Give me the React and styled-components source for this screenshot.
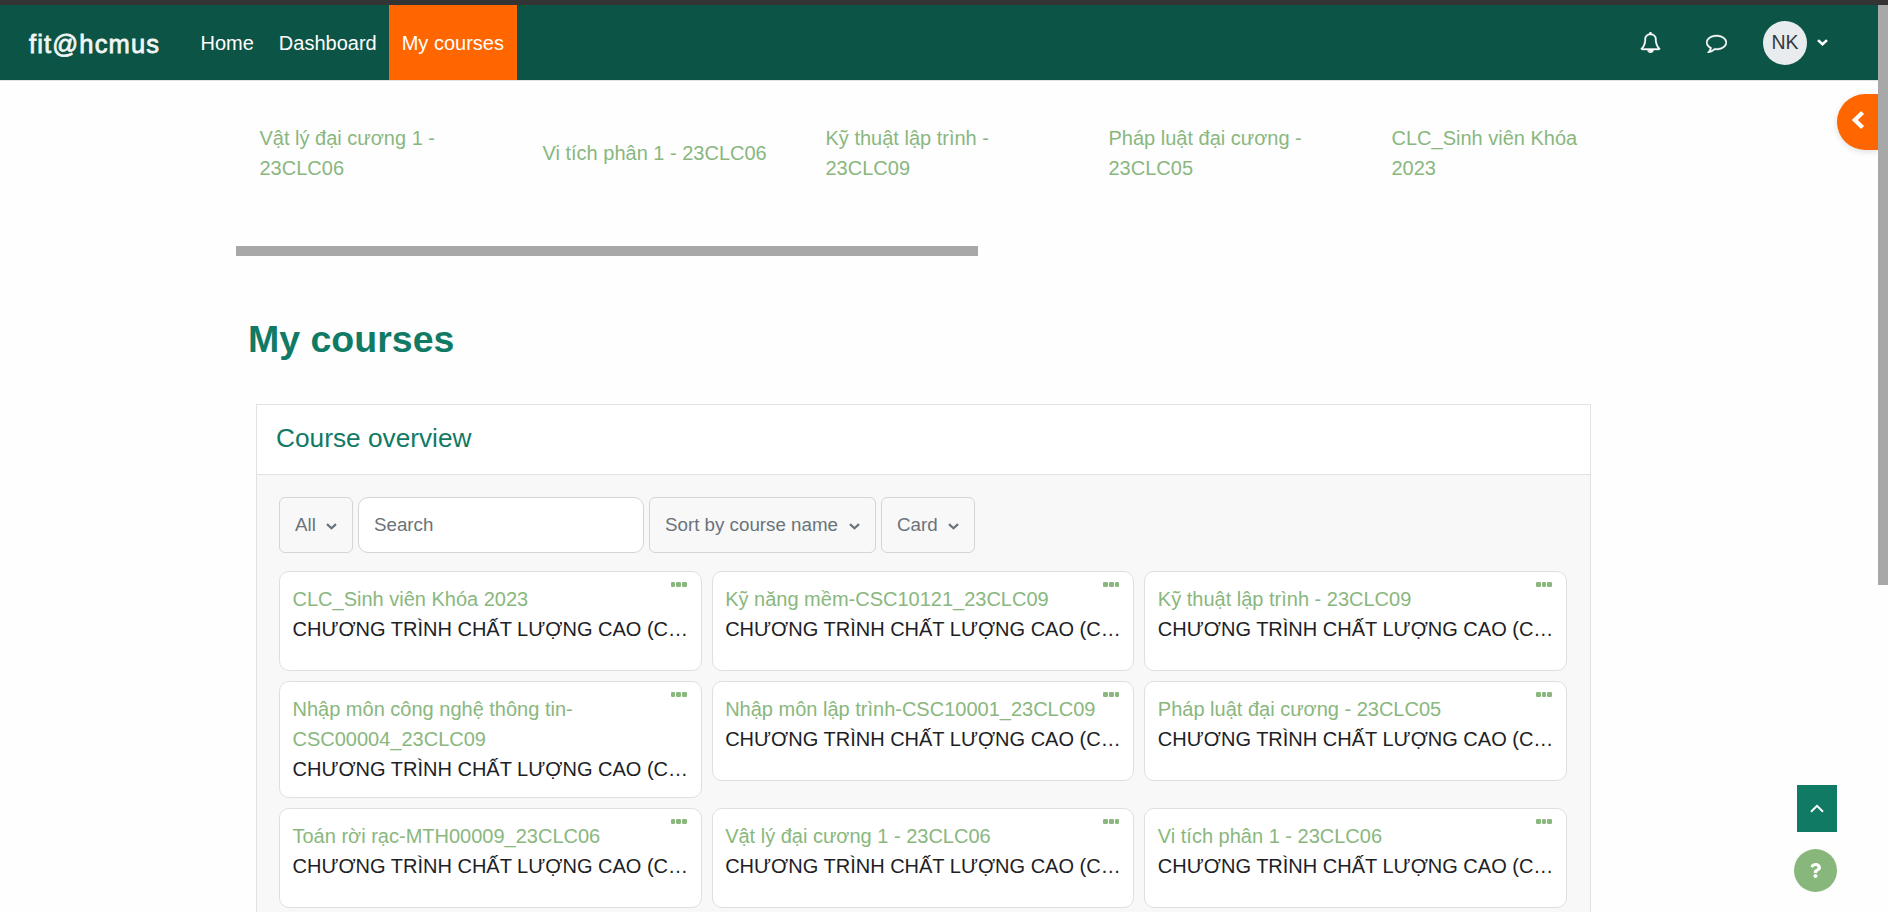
import React from "react";
import styled, { createGlobalStyle } from "styled-components";
import { FaQuestion } from "react-icons/fa";

const GlobalStyle = createGlobalStyle`
  *, *::before, *::after { box-sizing: border-box; }
  html, body { margin: 0; height: 912px; overflow: hidden; background: #fefefe; }
  body { font: 20px/30px "Liberation Sans", Arial, sans-serif; color: #1d2125; }
`;

const Screen = styled.div`
  position: relative;
  height: 912px;
  overflow: hidden;
  display: flex;
  flex-direction: column;
`;

const TopStrip = styled.div`
  flex: none;
  height: 5px;
  background: #343434;
`;

const Navbar = styled.header`
  flex: none;
  width: 1878px;
  height: 75px;
  display: flex;
  align-items: center;
  background: #0c5445;
  color: #fff;
  box-shadow: 0 1px 0 #dfe3e3;
`;

const Brand = styled.div`
  width: 188px;
  padding: 2px 0 0 29px;
  font-size: 25.5px;
  letter-spacing: 1.15px;
  -webkit-text-stroke: 0.8px #f1f5f4;
  color: #f1f5f4;
`;

const NavItem = styled.a`
  height: 75px;
  padding: 1px ${(p) => (p.$active ? "13.3px" : "12.5px")} 0 12.5px;
  line-height: 75px;
  white-space: nowrap;
  background: ${(p) => (p.$active ? "#ff6600" : "transparent")};
`;

const NavTools = styled.div`
  margin-left: auto;
  padding-right: 50px;
  display: flex;
  align-items: center;

  svg { display: block; }
`;

const ToolIcon = styled.span`
  width: 66px;
  padding-right: 1px;
  display: flex;
  justify-content: center;
`;

const Avatar = styled.div`
  width: 44px;
  height: 44px;
  margin: 1px 10px 0 13px;
  border-radius: 50%;
  background: #e9ecef;
  color: #343a40;
  font-size: 19.5px;
  line-height: 43px;
  text-align: center;
`;

const Content = styled.main`
  width: 1355px;
  margin-left: 236px;
`;

const RecentCourses = styled.nav`
  height: 166px;
  padding: 43px 0 0 23.5px;
  display: flex;
  overflow: hidden;
`;

const RecentItem = styled.a`
  flex: none;
  width: 283px;
  height: 60px;
  padding-right: 53px;
  display: flex;
  align-items: center;
  color: #89b77e;
`;

const HorizontalThumb = styled.div`
  width: 742px;
  height: 10px;
  background: #a8a8a8;
`;

const PageTitle = styled.h1`
  margin: 0;
  padding: 61px 0 0 12px;
  height: 148px;
  font-size: 37.5px;
  line-height: 45px;
  color: #117a65;
`;

const Panel = styled.section`
  margin-left: 20px;
  border: 1px solid #e1e2e3;
  background: #f8f8f8;
`;

const PanelTitle = styled.h2`
  margin: 0;
  height: 70px;
  padding: 18px 19px 0;
  border-bottom: 1px solid #e1e2e3;
  background: #fff;
  color: #117a65;
  font-size: 26.25px;
  font-weight: 400;
  line-height: 31.5px;
`;

const PanelBody = styled.div`
  padding: 22px 23px 30px 22px;
`;

const Filters = styled.div`
  display: flex;
  gap: 5px;
  margin-bottom: 18px;
  font-size: 18.75px;
  color: #6a737b;
`;

const FilterButton = styled.div`
  width: ${(p) => p.$width}px;
  height: 56px;
  padding: 0 15px;
  display: flex;
  align-items: center;
  justify-content: space-between;
  border: 1px solid #d3d5d7;
  border-radius: 6px;
  white-space: nowrap;

  svg { margin-top: 3px; }
`;

const SearchBox = styled(FilterButton)`
  background: #fff;
  border-radius: 10px;
`;

const CardGrid = styled.div`
  display: grid;
  grid-template-columns: repeat(3, 1fr);
  align-items: start;
  gap: 10px;
`;

const Card = styled.article`
  position: relative;
  min-width: 0;
  min-height: 100px;
  padding: 12px 12.5px 13px;
  border: 1px solid #dfdfdf;
  border-radius: 10px;
  background: #fff;
`;

const CardLink = styled.a`
  display: block;
  color: #89b77e;
`;

const Category = styled.div`
  margin-right: -3px;
  overflow: hidden;
  white-space: nowrap;
  text-overflow: ellipsis;
`;

const CardMenu = styled.span`
  position: absolute;
  top: 10px;
  right: 14px;
  display: flex;
  gap: 1px;
`;

const Dot = styled.i`
  width: 4.7px;
  height: 5px;
  border-radius: 1.3px;
  background: #89b77e;
`;

const DrawerTab = styled.div`
  position: absolute;
  top: 94px;
  right: 10px;
  width: 41px;
  height: 56px;
  padding: 17px 0 0 14px;
  border-radius: 28px 0 0 28px;
  background: #ff6600;
  box-shadow: 0 2px 6px rgba(0, 0, 0, 0.12);
  clip-path: inset(-10px 0 -12px -12px);

  svg { display: block; }
`;

const VerticalThumb = styled.div`
  position: absolute;
  top: 5px;
  right: 0;
  width: 10px;
  height: 580px;
  background: #a8a8a8;
`;

const FloatingActions = styled.div`
  position: absolute;
  right: 51px;
  bottom: 20px;
  display: flex;
  flex-direction: column;
  align-items: flex-end;
  gap: 17px;
  color: #fff;
`;

const BackToTop = styled.div`
  width: 40px;
  height: 47px;
  display: grid;
  place-items: center;
  background: #117a65;
`;

const HelpButton = styled.div`
  width: 43px;
  height: 43px;
  display: grid;
  place-items: center;
  border-radius: 50%;
  background: #88b77b;
`;

const Bell = () => (
  <svg width="21" height="21" viewBox="0 0 1792 1792" fill="currentColor" stroke="currentColor" strokeWidth="30">
    <path d="M912 1696q0-16-16-16-59 0-101.5-42.5t-42.5-101.5q0-16-16-16t-16 16q0 73 51.5 124.5t124.5 51.5q16 0 16-16zm-666-288h1300q-266-300-266-832 0-51-24-105t-69-103-121.5-80.5-169.5-31.5-169.5 31.5-121.5 80.5-69 103-24 105q0 532-266 832zm1482 0q0 52-38 90t-90 38h-448q0 106-75 181t-181 75-181-75-75-181h-448q-52 0-90-38t-38-90q50-42 91-88t85-119.5 74.5-158.5 50-206 19.5-260q0-152 117-282.5t307-158.5q-8-19-8-39 0-40 28-68t68-28 68 28 28 68q0 20-8 39 190 28 307 158.5t117 282.5q0 139 19.5 260t50 206 74.5 158.5 85 119.5 91 88z" />
  </svg>
);

const Comment = () => (
  <svg width="21" height="21" viewBox="0 0 1792 1792" fill="currentColor" stroke="currentColor" strokeWidth="30">
    <path d="M896 384q-204 0-381.5 69.5t-282 187.5-104.5 255q0 112 71.5 213.5t201.5 175.5l87 50-27 96q-24 91-70 172 152-63 275-171l43-38 57 6q69 8 130 8 204 0 381.5-69.5t282-187.5 104.5-255-104.5-255-282-187.5-381.5-69.5zm896 512q0 174-120 321.5t-326 233-450 85.5q-70 0-145-8-198 175-460 242-49 14-114 22h-5q-15 0-27-10.5t-16-27.5v-1q-3-4-.5-12t2-10 4.5-9.5l6-9 7-8.5 8-9q7-8 31-34.5t34.5-38 31-39.5 32.5-51 27-59 26-76q-157-89-247.5-220t-90.5-281q0-174 120-321.5t326-233 450-85.5 450 85.5 326 233 120 321.5z" />
  </svg>
);

const Caret = ({ weight = 2.2 }) => (
  <svg width="11" height="7" viewBox="0 0 11 7" fill="none" stroke="currentColor" strokeWidth={weight}>
    <path d="M1 1.1 5.5 5.2 10 1.1" />
  </svg>
);

const recent = [
  "Vật lý đại cương 1 - 23CLC06",
  "Vi tích phân 1 - 23CLC06",
  "Kỹ thuật lập trình - 23CLC09",
  "Pháp luật đại cương - 23CLC05",
  "CLC_Sinh viên Khóa 2023",
];

const courses = [
  "CLC_Sinh viên Khóa 2023",
  "Kỹ năng mềm-CSC10121_23CLC09",
  "Kỹ thuật lập trình - 23CLC09",
  "Nhập môn công nghệ thông tin-CSC00004_23CLC09",
  "Nhập môn lập trình-CSC10001_23CLC09",
  "Pháp luật đại cương - 23CLC05",
  "Toán rời rạc-MTH00009_23CLC06",
  "Vật lý đại cương 1 - 23CLC06",
  "Vi tích phân 1 - 23CLC06",
];

export default function App() {
  return (
    <Screen>
      <GlobalStyle />
      <TopStrip />
      <Navbar>
        <Brand>fit@hcmus</Brand>
        <NavItem>Home</NavItem>
        <NavItem>Dashboard</NavItem>
        <NavItem $active>My courses</NavItem>
        <NavTools>
          <ToolIcon><Bell /></ToolIcon>
          <ToolIcon><Comment /></ToolIcon>
          <Avatar>NK</Avatar>
          <Caret weight={2.6} />
        </NavTools>
      </Navbar>
      <Content>
        <RecentCourses>
          {recent.map((name) => (
            <RecentItem key={name}>{name}</RecentItem>
          ))}
        </RecentCourses>
        <HorizontalThumb />
        <PageTitle>My courses</PageTitle>
        <Panel>
          <PanelTitle>Course overview</PanelTitle>
          <PanelBody>
            <Filters>
              <FilterButton $width={74}>All <Caret /></FilterButton>
              <SearchBox $width={286}>Search</SearchBox>
              <FilterButton $width={227}>Sort by course name <Caret /></FilterButton>
              <FilterButton $width={94}>Card <Caret /></FilterButton>
            </Filters>
            <CardGrid>
              {courses.map((name) => (
                <Card key={name}>
                  <CardLink>{name}</CardLink>
                  <Category>CHƯƠNG TRÌNH CHẤT LƯỢNG CAO (C…</Category>
                  <CardMenu><Dot /><Dot /><Dot /></CardMenu>
                </Card>
              ))}
            </CardGrid>
          </PanelBody>
        </Panel>
      </Content>
      <DrawerTab>
        <svg width="14" height="18" viewBox="0 0 14 18" fill="none" stroke="#fff" strokeWidth="4.2">
          <path d="M11.6 1.5 3.8 9l7.8 7.5" />
        </svg>
      </DrawerTab>
      <VerticalThumb />
      <FloatingActions>
        <BackToTop>
          <svg width="14" height="9" viewBox="0 0 14 9" fill="none" stroke="currentColor" strokeWidth="2">
            <path d="M1 7.8 7 1.8l6 6" />
          </svg>
        </BackToTop>
        <HelpButton><FaQuestion size={15} /></HelpButton>
      </FloatingActions>
    </Screen>
  );
}
